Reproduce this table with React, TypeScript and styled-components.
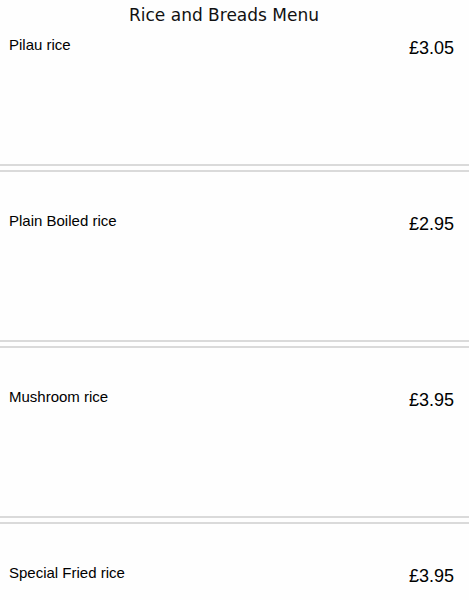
import React from "react";
import styled, { createGlobalStyle } from "styled-components";

const Global = createGlobalStyle`
  html, body { margin: 0; padding: 0; background: #fefefe; }
  body { font-family: "Liberation Sans", Arial, sans-serif; color: #000; }
`;

const Page = styled.div`
  width: 469px;
  display: flex;
  flex-direction: column;
`;

const Title = styled.h1`
  margin: 0;
  height: 30px;
  padding-right: 21px;
  font-family: "DejaVu Sans", Verdana, sans-serif;
  font-weight: normal;
  font-size: 17px;
  line-height: 30px;
  text-align: center;
  color: #111;
`;

const Item = styled.div<{ $first?: boolean }>`
  height: ${(p) => (p.$first ? 134 : 168)}px;
  box-sizing: border-box;
  padding: ${(p) => (p.$first ? 7 : 41)}px 15px 0 9px;
  display: flex;
  justify-content: space-between;
  align-items: flex-start;
`;

const Name = styled.span`
  font-size: 15px;
  line-height: 16px;
`;

const Price = styled.span`
  font-size: 18px;
  line-height: 20px;
  margin-top: 1px;
`;

const Divider = styled.div`
  height: 4px;
  border-top: 2px solid #dadada;
  border-bottom: 2px solid #dadada;
`;

const items = [
  { name: "Pilau rice", price: "£3.05" },
  { name: "Plain Boiled rice", price: "£2.95" },
  { name: "Mushroom rice", price: "£3.95" },
  { name: "Special Fried rice", price: "£3.95" },
];

export default function App() {
  return (
    <Page>
      <Global />
      <Title>Rice and Breads Menu</Title>
      {items.map((it, i) => (
        <React.Fragment key={it.name}>
          {i > 0 && <Divider />}
          <Item $first={i === 0}>
            <Name>{it.name}</Name>
            <Price>{it.price}</Price>
          </Item>
        </React.Fragment>
      ))}
    </Page>
  );
}
